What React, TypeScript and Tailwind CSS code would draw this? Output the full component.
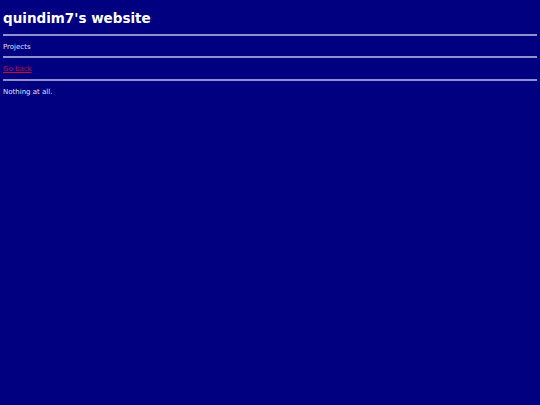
export default function App() {
  return (
    <div className="min-h-[405px] w-full bg-[#000080] px-[3px] pt-[8px] text-[#e0e0ff] font-['DejaVu_Sans',sans-serif]">
      <h1 className="text-[13.5px] font-bold leading-[20px] text-white">quindim7's website</h1>
      <hr className="mt-[6px] border-t-2 border-[#9090d0]" />
      <div className="pt-[6px] pb-[4px] text-[7px] leading-[10px]">Projects</div>
      <hr className="border-t-2 border-[#9090d0]" />
      <div className="pt-[6px] pb-[5px] text-[7px] leading-[10px]">
        <a href="#" className="text-[#c0103a] underline">Go back</a>
      </div>
      <hr className="border-t-2 border-[#9090d0]" />
      <div className="pt-[6px] text-[7px] leading-[10px]">Nothing at all.</div>
    </div>
  );
}
